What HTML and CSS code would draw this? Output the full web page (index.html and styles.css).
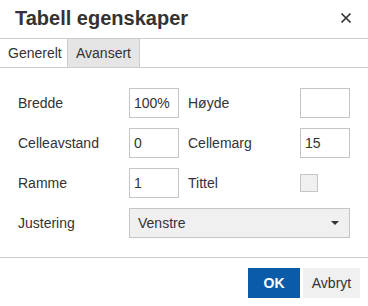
FILE: index.html
```html
<!DOCTYPE html>
<html>
<head>
<meta charset="utf-8">
<link rel="stylesheet" href="styles.css">
</head>
<body>
<div class="dialog">
  <div class="header">
    <div class="title">Tabell egenskaper</div>
    <button class="close" aria-label="Lukk">
      <svg width="12" height="12" viewBox="0 0 12 12"><path d="M1.5 1.5L10.5 10.5M10.5 1.5L1.5 10.5" stroke="#333" stroke-width="1.7" fill="none"/></svg>
    </button>
  </div>
  <div class="tabs">
    <div class="tab active">Generelt</div>
    <div class="tab">Avansert</div>
  </div>
  <div class="form">
    <label class="lbl">Bredde</label>
    <div class="cell"><div class="input">100%</div></div>
    <label class="lbl">Høyde</label>
    <div class="cell"><div class="input"></div></div>

    <label class="lbl">Celleavstand</label>
    <div class="cell"><div class="input">0</div></div>
    <label class="lbl">Cellemarg</label>
    <div class="cell"><div class="input">15</div></div>

    <label class="lbl">Ramme</label>
    <div class="cell"><div class="input">1</div></div>
    <label class="lbl">Tittel</label>
    <div class="cell"><div class="check"></div></div>

    <label class="lbl">Justering</label>
    <div class="select"><span>Venstre</span><span class="caret"></span></div>
  </div>
  <div class="footer">
    <button class="btn primary">OK</button>
    <button class="btn">Avbryt</button>
  </div>
</div>
</body>
</html>
```
FILE: styles.css
```css
* { box-sizing: border-box; }
html, body { margin: 0; padding: 0; background: #fff; }
body { font-family: "Liberation Sans", Arial, sans-serif; color: #333; font-size: 14px; }
.dialog { width: 368px; height: 306px; background: #fff; }
.header {
  height: 39px;
  border-bottom: 1px solid #ccc;
  display: flex;
  align-items: center;
  justify-content: space-between;
  padding: 0 15px 0 15px;
}
.title { font-size: 20px; font-weight: bold; color: #333; margin-top: -1px; }
.close { border: 0; background: none; padding: 0; width: 12px; height: 12px; display: flex; margin-top: -2px; margin-right: 1px; }
.tabs {
  height: 29px;
  border-bottom: 1px solid #ccc;
  display: flex;
}
.tab {
  height: 28px;
  line-height: 28px;
  padding: 0 8px;
  font-size: 14px;
  color: #333;
}
.tab.active { width: 67px; }
.tab:not(.active) {
  background: #e5e5e5;
  border-left: 1px solid #ccc;
  border-right: 1px solid #ccc;
  width: 73px;
}
.form {
  display: grid;
  grid-template-columns: 111px 59px 112px 50px;
  grid-auto-rows: 30px;
  row-gap: 10px;
  padding: 20px 0 0 18px;
  height: 190px;
  border-bottom: 1px solid #ccc;
}
.lbl { display: flex; align-items: center; font-size: 14px; color: #333; }
.cell { display: flex; align-items: center; }
.input {
  width: 50px;
  height: 30px;
  border: 1px solid #c5c5c5;
  padding: 0 4px;
  line-height: 28px;
  font-size: 14px;
  color: #333;
  background: #fff;
}
.check {
  width: 18px;
  height: 18px;
  border: 1px solid #c5c5c5;
  background: #f0f0f0;
}
.select {
  grid-column: 2 / 5;
  height: 30px;
  width: 221px;
  background: #f0f0f0;
  border: 1px solid #c5c5c5;
  display: flex;
  align-items: center;
  justify-content: space-between;
  padding: 0 8px 0 8px;
  font-size: 14px;
  color: #333;
}
.caret {
  width: 0; height: 0;
  border-left: 4px solid transparent;
  border-right: 4px solid transparent;
  border-top: 4px solid #333;
  margin-right: 2px;
}
.footer {
  display: flex;
  justify-content: flex-end;
  gap: 3px;
  padding: 10px 8px 0 0;
}
.btn {
  height: 30px;
  border: 0;
  font-family: "Liberation Sans", Arial, sans-serif;
  font-size: 14px;
  color: #333;
  background: #f0f0f0;
  padding: 0;
  width: 57px;
}
.btn.primary { background: #0b5ca8; color: #fff; font-weight: bold; width: 52px; }
```
